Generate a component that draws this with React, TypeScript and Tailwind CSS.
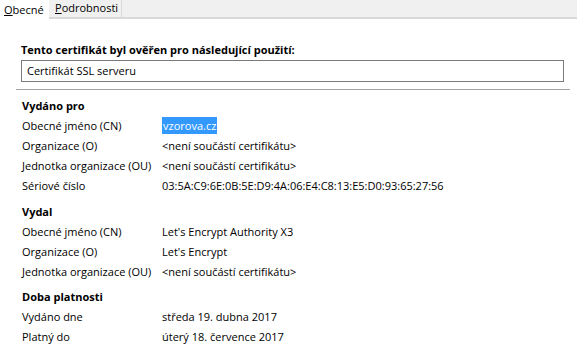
import React from 'react';

const Row = ({ label, value, selected }: { label: string; value: string; selected?: boolean }) => (
    <div className="flex h-5 items-center">
        <div className="w-[140px] shrink-0 whitespace-nowrap">{label}</div>
        <div className="whitespace-nowrap">
            {selected ? <span className="bg-[#3399ff] text-white px-[1px] py-[1px]">{value}</span> : value}
        </div>
    </div>
);

const Section = ({ title, children, className }: any) => (
    <div className={className}>
        <div className="h-5 flex items-center font-bold">{title}</div>
        {children}
    </div>
);

export default function App() {
    const NA = '<není součástí certifikátu>';
    return (
        <div className="w-[577px] h-[353px] bg-white text-black text-[11px] overflow-hidden" style={{ fontFamily: '"Open Sans", "Noto Sans", sans-serif' }}>
            {/* Záložky */}
            <div className="flex h-[19px] bg-[#f0f0f0] border-b-2 border-[#d9d9d9]">
                <div className="bg-white px-1 flex items-center h-[21px] w-[49px]">
                    <span><u>O</u>becné</span>
                </div>
                <div className="px-[6px] w-[73px] flex items-center border-r border-[#d9d9d9]">
                    <span><u>P</u>odrobnosti</span>
                </div>
            </div>

            <div className="pl-[21px] pr-[13px] pt-[21px]">
                <div className="font-bold h-5 flex items-center">Tento certifikát byl ověřen pro následující použití:</div>
                <div className="h-[22px] border border-[#7a7a7a] flex items-center px-[5px]">Certifikát SSL serveru</div>
            </div>

            <div className="ml-[16px] mr-[7px] mt-[7px] border-t border-[#a0a0a0]"></div>

            <div className="pl-[22px] pt-[6px]">
                <Section title="Vydáno pro">
                    <Row label="Obecné jméno (CN)" value="vzorova.cz" selected />
                    <Row label="Organizace (O)" value={NA} />
                    <Row label="Jednotka organizace (OU)" value={NA} />
                    <Row label="Sériové číslo" value="03:5A:C9:6E:0B:5E:D9:4A:06:E4:C8:13:E5:D0:93:65:27:56" />
                </Section>
                <Section title="Vydal" className="mt-[6px]">
                    <Row label="Obecné jméno (CN)" value="Let's Encrypt Authority X3" />
                    <Row label="Organizace (O)" value="Let's Encrypt" />
                    <Row label="Jednotka organizace (OU)" value={NA} />
                </Section>
                <Section title="Doba platnosti" className="mt-[5px]">
                    <Row label="Vydáno dne" value="středa 19. dubna 2017" />
                    <Row label="Platný do" value="úterý 18. července 2017" />
                </Section>
            </div>
        </div>
    );
}
